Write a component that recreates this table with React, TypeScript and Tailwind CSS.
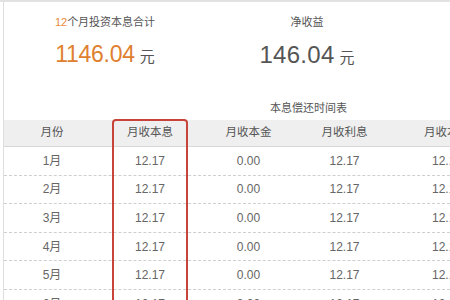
const cols = ["w-[96px]", "w-[100px]", "w-[97px]", "w-[95px]", "w-[110px]"];

const headers = ["月份", "月收本息", "月收本金", "月收利息", "月收本息"];

const rows = [1, 2, 3, 4, 5, 6].map((m) => [`${m}月`, "12.17", "0.00", "12.17", "12.17"]);

const font = { fontFamily: '"Liberation Sans", "Noto Sans CJK SC", sans-serif' };

const App = () => {
  return (
    <div
      className="relative w-[450px] h-[300px] overflow-hidden bg-white border-t-2 border-[#e2e2e2]"
      style={font}
    >
      <div className="ml-[3px] h-full border-l border-[#dedede]">
        {/* summary */}
        <div className="flex pt-[12px]">
          <div className="w-[202px] flex flex-col items-center">
            <p className="h-[16px] leading-[16px] text-[11px] text-[#555]">
              <span className="text-[#e8893a]">12</span>个月投资本息合计
            </p>
            <p className="mt-[7px] h-[30px] flex items-baseline gap-[5px]">
              <span className="text-[23px] text-[#e07f30] tracking-[-0.3px]">1146.04</span>
              <span className="text-[15px] text-[#555]">元</span>
            </p>
          </div>
          <div className="w-[202px] flex flex-col items-center">
            <p className="h-[16px] leading-[16px] text-[11px] text-[#555]">净收益</p>
            <p className="mt-[7px] h-[30px] flex items-baseline gap-[5px]">
              <span className="text-[24px] text-[#555] tracking-[0.3px]">146.04</span>
              <span className="text-[15px] text-[#555]">元</span>
            </p>
          </div>
        </div>

        <p className="mt-[33px] h-[16px] leading-[16px] text-[11px] text-[#555] pl-[266px]">
          本息偿还时间表
        </p>

        {/* table */}
        <div className="mt-[4px]">
          <div className="flex h-[27px] bg-[#efefef] border-b border-[#d8d8d8] text-[11.5px] text-[#555]">
            {headers.map((h, i) => (
              <div key={i} className={`${cols[i]} shrink-0 flex items-center justify-center`}>
                {h}
              </div>
            ))}
          </div>
          {rows.map((r, ri) => (
            <div
              key={ri}
              className="flex h-[28.6px] border-b border-dashed border-[#cfcfcf] text-[12px] text-[#666]"
            >
              {r.map((c, i) => (
                <div key={i} className={`${cols[i]} shrink-0 flex items-center justify-center`}>
                  {c}
                </div>
              ))}
            </div>
          ))}
        </div>
      </div>

      {/* highlight */}
      <div className="absolute left-[112px] top-[117px] w-[76px] h-[220px] border-2 border-[#c8443a] rounded-[4px]" />
    </div>
  );
};

export default App;
